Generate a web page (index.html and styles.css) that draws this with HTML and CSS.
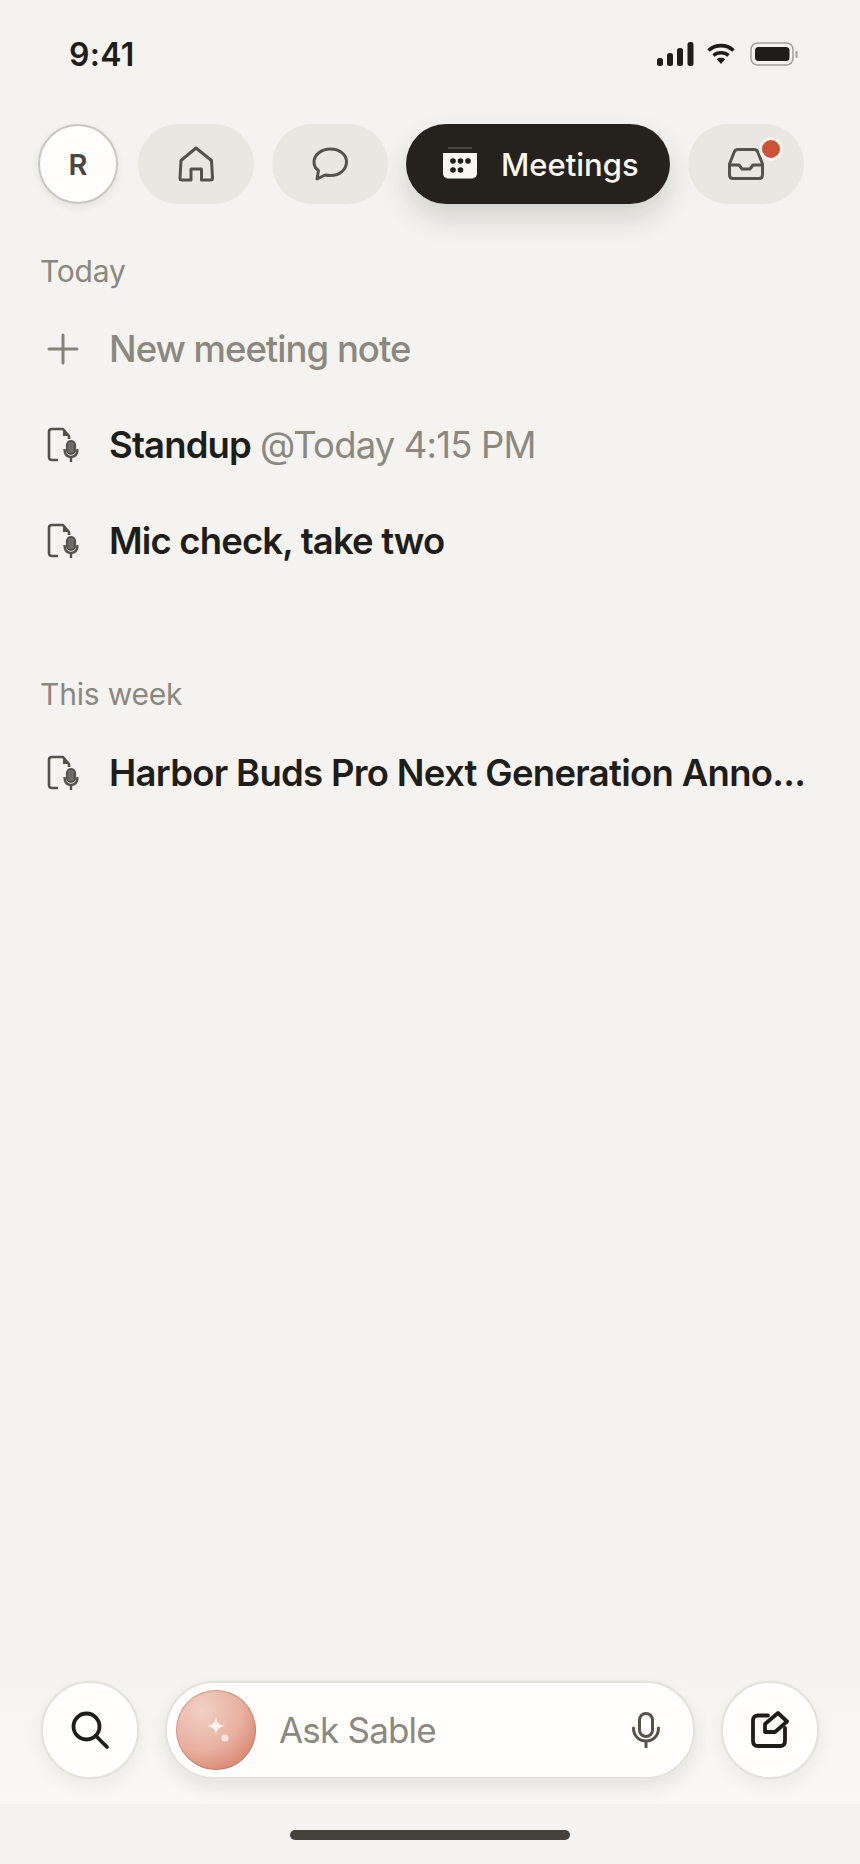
FILE: index.html
```html
<!DOCTYPE html>
<html lang="en">
<head>
<meta charset="utf-8">
<title>Meetings</title>
<link rel="stylesheet" href="styles.css">
</head>
<body>
<div class="page">
  <header class="status">
    <span class="time">9:41</span>
    <div class="status-icons">
      <svg width="38" height="24" viewBox="0 0 38 24"><rect x="0" y="16" width="6" height="8" rx="2.5"/><rect x="10" y="11" width="6" height="13" rx="2.5"/><rect x="20" y="6" width="6" height="18" rx="2.5"/><rect x="30.500" y="0" width="6" height="24" rx="2.5"/></svg>
      <svg class="wifi" width="28" height="22" viewBox="0 0 28 22"><path d="M1.500 7.500C8.500 1 19.500 1 26.500 7.500" fill="none" stroke="#1f1d19" stroke-width="3.600"/><path d="M6.500 12.500C10.500 8.800 17.500 8.800 21.500 12.500" fill="none" stroke="#1f1d19" stroke-width="3.400"/><path d="M9.800 16.200C12 14.300 16 14.300 18.200 16.200L14 21Z"/></svg>
      <svg class="battery" width="48" height="24" viewBox="0 0 48 24"><rect x="1" y="1" width="42" height="22" rx="6.500" fill="none" stroke="#a3a19b" stroke-width="1.500"/><rect x="5" y="5" width="34.500" height="14" rx="3.500"/><rect x="45.500" y="9" width="2" height="7" rx="1" fill="#a3a19b"/></svg>
    </div>
  </header>

  <nav class="tabs">
    <div class="avatar">R</div>
    <div class="tab">
      <svg width="36" height="36" viewBox="0 0 36 36" class="line-icon"><path d="M18 2L33.500 14.500L34.500 32Q34.500 34 32.500 34H23.500V23H13V34H4Q2 34 2 32L3 14.500Z"/></svg>
    </div>
    <div class="tab">
      <svg width="36" height="36" viewBox="0 0 36 36" class="line-icon"><path d="M18.500 3C9.500 3 2 8.500 2 16C2 19.500 3.500 22.500 6.500 24.500L5 33L13 29C14.500 29.300 17 29.500 18.500 29.500C27.500 29.500 34.500 23.500 34.500 16C34.500 8.500 27.500 3 18.500 3Z"/></svg>
    </div>
    <div class="tab-active">
      <svg width="36" height="34" viewBox="0 0 36 34"><path d="M6 1H30" stroke="#6d6a63" stroke-width="1" fill="none"/><path d="M1 6H35V26C35 30 32.500 31.500 28.500 31.500H7.500C3.500 31.500 1 30 1 26Z" fill="#f8f6f1"/><g fill="#1f1d19"><circle cx="11" cy="14" r="2.800"/><circle cx="18.500" cy="14" r="2.800"/><circle cx="26" cy="14" r="2.800"/><circle cx="11" cy="23" r="2.800"/><circle cx="18.500" cy="23" r="2.800"/></g></svg>
      <span>Meetings</span>
    </div>
    <div class="tab">
      <svg width="36" height="32" viewBox="0 0 36 32" class="line-icon"><path d="M10 1.500H26Q29 1.500 30 4.500L34.500 16V27Q34.500 30.500 31 30.500H5Q1.500 30.500 1.500 27V16L6 4.500Q7 1.500 10 1.500Z"/><path d="M1.500 17H11L14 21H22L25 17H34.500"/></svg>
      <span class="badge"></span>
    </div>
  </nav>

  <main class="content">
    <section class="group">
      <h2>Today</h2>
      <div class="row muted">
        <svg width="32" height="32" viewBox="0 0 32 32" class="plus"><path d="M16 2V30M2 16H30"/></svg>
        <span>New meeting note</span>
      </div>
      <div class="row">
        <svg width="32" height="36" viewBox="0 0 32 36" class="doc"><use href="#doc-mic"/></svg>
        <span><b>Standup</b> <em>@Today 4:15 PM</em></span>
      </div>
      <div class="row">
        <svg width="32" height="36" viewBox="0 0 32 36" class="doc"><use href="#doc-mic"/></svg>
        <span><b>Mic check, take two</b></span>
      </div>
    </section>
    <section class="group week">
      <h2>This week</h2>
      <div class="row">
        <svg width="32" height="36" viewBox="0 0 32 36" class="doc"><use href="#doc-mic"/></svg>
        <span class="clip"><b>Harbor Buds Pro Next Generation Anno...</b></span>
      </div>
    </section>
  </main>

  <footer class="dock">
    <div class="round">
      <svg width="40" height="40" viewBox="0 0 40 40" class="dark-icon"><circle cx="16.500" cy="16.500" r="13"/><path d="M26 26L37 37"/></svg>
    </div>
    <div class="ask">
      <div class="orb">
        <svg width="30" height="32" viewBox="0 0 30 32"><path d="M15 3C16 9 18 11 24 12C18 13 16 15 15 21C14 15 12 13 6 12C12 11 14 9 15 3Z" fill="#fdf3ee"/><circle cx="24" cy="24" r="3.600" fill="#f9e2d7"/></svg>
      </div>
      <span class="ask-label">Ask Sable</span>
      <svg width="28" height="36" viewBox="0 0 28 36" class="mic"><rect x="7.500" y="1.500" width="13" height="23" rx="6.500"/><path d="M1.500 16C1.500 24 7 29 14 29C21 29 26.500 24 26.500 16M14 29V35"/></svg>
    </div>
    <div class="round">
      <svg width="38" height="38" viewBox="0 0 38 38" class="dark-icon"><path d="M17 4.500H7Q2 4.500 2 9.500V30Q2 35 7 35H29Q34 35 34 30V17"/><path d="M27 2L36 10.500L24 21H14V13Z"/></svg>
    </div>
  </footer>
  <div class="home-area"><div class="home-bar"></div></div>
</div>

<svg width="0" height="0" class="defs">
  <symbol id="doc-mic" viewBox="0 0 32 36" overflow="visible">
    <path d="M11 33H5Q2 33 2 30V5Q2 2 5 2H16L22 9V12" fill="none" stroke="#55524c" stroke-width="2.600" stroke-linejoin="round"/>
    <path d="M16 2.500V9H22Z" fill="#55524c"/>
    <rect x="20" y="14" width="8" height="13" rx="4" fill="#6f6c65" stroke="#55524c" stroke-width="2.200"/>
    <path d="M17.500 22C17.500 28 20 30 24 30C28 30 30.500 28 30.500 22M24 30V35" fill="none" stroke="#55524c" stroke-width="2.400"/>
  </symbol>
</svg>
</body>
</html>
```
FILE: styles.css
```css
* { box-sizing: border-box; }
html, body { margin: 0; padding: 0; }
body {
  background: #f4f3ef;
  font-family: Inter, "Liberation Sans", sans-serif;
  color: #1f1d19;
}
.page {
  width: 860px;
  height: 1864px;
  display: flex;
  flex-direction: column;
  overflow: hidden;
}
.status {
  height: 124px;
  padding: 40px 62px 0 69px;
  display: flex;
  justify-content: space-between;
  align-items: flex-start;
}
.time {
  font-size: 32px;
  line-height: 30px;
  font-weight: 600;
  letter-spacing: 0.3px;
}
.status-icons {
  display: flex;
  align-items: center;
  gap: 12px;
  padding-top: 2px;
}
.status-icons svg { fill: #1f1d19; display: block; }
.wifi { margin-right: 3px; }

.tabs {
  display: flex;
  align-items: center;
  gap: 18px;
  padding: 0 0 0 38px;
}
.avatar {
  width: 80px;
  height: 80px;
  margin-right: 2px;
  border-radius: 50%;
  background: #fffefc;
  border: 2px solid #c9c7c2;
  box-shadow: 0 3px 8px rgba(40, 35, 25, .08);
  display: flex;
  align-items: center;
  justify-content: center;
  font-size: 29px;
  font-weight: 600;
  color: #4a4742;
}
.tab {
  position: relative;
  width: 116px;
  height: 80px;
  border-radius: 40px;
  background: #e9e7e2;
  display: flex;
  align-items: center;
  justify-content: center;
}
.line-icon { fill: none; stroke: #55524c; stroke-width: 3; stroke-linejoin: round; stroke-linecap: round; }
.tab-active {
  width: 264px;
  height: 80px;
  border-radius: 40px;
  background: #25221d;
  color: #fbfaf6;
  display: flex;
  align-items: center;
  gap: 23px;
  padding-left: 36px;
  font-size: 31px;
  font-weight: 500;
  box-shadow: 0 14px 28px rgba(40, 35, 25, .16);
}
.badge {
  position: absolute;
  top: 13px;
  left: 71px;
  width: 18px;
  height: 18px;
  border-radius: 50%;
  background: #cc5337;
  box-sizing: content-box;
  border: 3px solid #f4f3ef;
}
.content { flex: 1; padding: 0 0 0 40px; }
.group h2 {
  margin: 0;
  font-size: 30px;
  line-height: 36px;
  font-weight: 400;
  letter-spacing: -0.2px;
  color: #8b8880;
}
.group:first-child { padding-top: 49px; }
.week { margin-top: 87px; }
.row {
  height: 96px;
  padding-left: 7px;
  display: flex;
  align-items: center;
  gap: 30px;
  font-size: 36.5px;
  font-weight: 500;
  letter-spacing: -0.85px;
  white-space: nowrap;
}
.group h2 + .row { margin-top: 12px; }
.week h2 + .row { margin-top: 13px; }
.row svg { flex: none; display: block; }
.row.muted { color: #8b8880; letter-spacing: -0.98px; }
.row b { font-weight: 600; color: #1f1d19; }
.row em { font-style: normal; font-weight: 400; color: #8b8880; }
.row .clip { letter-spacing: -0.7px; }
.plus { fill: none; stroke: #85827a; stroke-width: 3; stroke-linecap: round; }
.doc { overflow: visible; }
.defs { position: absolute; }

.dock {
  height: 132px;
  padding: 9px 41px 0;
  display: flex;
  align-items: flex-start;
  gap: 26px;
  background: linear-gradient(to bottom, #f5f4f0, #f9f8f5);
}
.round {
  width: 98px;
  height: 98px;
  border-radius: 50%;
  background: #fffefc;
  border: 2px solid #e4e2dd;
  box-shadow: 0 0 0 1px #eeede8, 0 8px 18px rgba(40, 35, 25, .06);
  display: flex;
  align-items: center;
  justify-content: center;
}
.dark-icon { fill: none; stroke: #1f1d19; stroke-width: 3.800; stroke-linejoin: round; stroke-linecap: round; }
.ask {
  width: 530px;
  height: 98px;
  border-radius: 49px;
  background: #fffefc;
  border: 2px solid #e4e2dd;
  box-shadow: 0 0 0 1px #eeede8, 0 8px 18px rgba(40, 35, 25, .1);
  display: flex;
  align-items: center;
  padding: 0 33px 0 9px;
}
.orb {
  width: 80px;
  height: 80px;
  flex: none;
  border-radius: 50%;
  background: radial-gradient(circle at 32% 25%, #f1d0c5 0%, #e8b09f 50%, #cf7059 100%);
  box-shadow: inset 0 0 0 1px rgba(170, 80, 60, .35);
  display: flex;
  align-items: center;
  justify-content: center;
}
.ask-label {
  flex: 1;
  margin-left: 23px;
  font-size: 35px;
  letter-spacing: -0.8px;
  color: #8b8880;
}
.mic { fill: none; stroke: #55524c; stroke-width: 3; stroke-linecap: round; }
.home-area {
  height: 60px;
  padding-top: 26px;
  display: flex;
  justify-content: center;
}
.home-bar {
  width: 280px;
  height: 10px;
  border-radius: 5px;
  background: #45423b;
}
```
